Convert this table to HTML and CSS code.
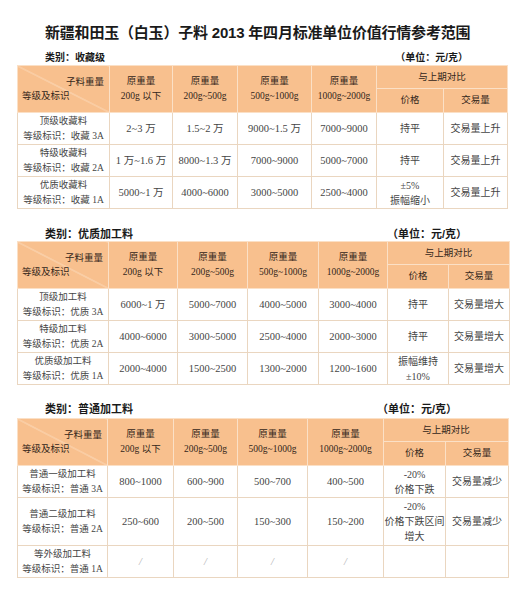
FILE: index.html
```html
<!DOCTYPE html>
<html lang="zh-CN">
<head>
<meta charset="utf-8">
<title>新疆和田玉（白玉）子料 2013 年四月标准单位价值行情参考范围</title>
<link rel="stylesheet" href="styles.css">
</head>
<body>
<div class="page">
  <h1 class="title">新疆和田玉（白玉）子料 2013 年四月标准单位价值行情参考范围</h1>

  <section class="section s1">
    <div class="meta"><span class="cat">类别：收藏级</span><span class="unit">（单位：元/克）</span></div>
    <table class="grid">
      <colgroup><col class="c1"><col class="c2"><col class="c3"><col class="c4"><col class="c5"><col class="c6"><col class="c7"></colgroup>
      <thead>
        <tr class="h1">
          <th rowspan="2" class="diag"><span class="dr">子料重量</span><span class="dl">等级及标识</span></th>
          <th rowspan="2">原重量<br>200g 以下</th>
          <th rowspan="2">原重量<br>200g~500g</th>
          <th rowspan="2">原重量<br>500g~1000g</th>
          <th rowspan="2">原重量<br>1000g~2000g</th>
          <th colspan="2">与上期对比</th>
        </tr>
        <tr class="h2"><th>价格</th><th>交易量</th></tr>
      </thead>
      <tbody>
        <tr><td class="lbl">顶级收藏料<br>等级标识：收藏 3A</td><td>2~3 万</td><td>1.5~2 万</td><td>9000~1.5 万</td><td>7000~9000</td><td class="cj">持平</td><td class="cj">交易量上升</td></tr>
        <tr><td class="lbl">特级收藏料<br>等级标识：收藏 2A</td><td>1 万~1.6 万</td><td>8000~1.3 万</td><td>7000~9000</td><td>5000~7000</td><td class="cj">持平</td><td class="cj">交易量上升</td></tr>
        <tr><td class="lbl">优质收藏料<br>等级标识：收藏 1A</td><td>5000~1 万</td><td>4000~6000</td><td>3000~5000</td><td>2500~4000</td><td class="cj">±5%<br>振幅缩小</td><td class="cj">交易量上升</td></tr>
      </tbody>
    </table>
  </section>

  <section class="section s2">
    <div class="meta"><span class="cat">类别：优质加工料</span><span class="unit">（单位：元/克）</span></div>
    <table class="grid">
      <colgroup><col class="c1"><col class="c2"><col class="c3"><col class="c4"><col class="c5"><col class="c6"><col class="c7"></colgroup>
      <thead>
        <tr class="h1">
          <th rowspan="2" class="diag"><span class="dr">子料重量</span><span class="dl">等级及标识</span></th>
          <th rowspan="2">原重量<br>200g 以下</th>
          <th rowspan="2">原重量<br>200g~500g</th>
          <th rowspan="2">原重量<br>500g~1000g</th>
          <th rowspan="2">原重量<br>1000g~2000g</th>
          <th colspan="2">与上期对比</th>
        </tr>
        <tr class="h2"><th>价格</th><th>交易量</th></tr>
      </thead>
      <tbody>
        <tr><td class="lbl">顶级加工料<br>等级标识：优质 3A</td><td>6000~1 万</td><td>5000~7000</td><td>4000~5000</td><td>3000~4000</td><td class="cj">持平</td><td class="cj">交易量增大</td></tr>
        <tr><td class="lbl">特级加工料<br>等级标识：优质 2A</td><td>4000~6000</td><td>3000~5000</td><td>2500~4000</td><td>2000~3000</td><td class="cj">持平</td><td class="cj">交易量增大</td></tr>
        <tr><td class="lbl">优质级加工料<br>等级标识：优质 1A</td><td>2000~4000</td><td>1500~2500</td><td>1300~2000</td><td>1200~1600</td><td class="cj">振幅维持<br>±10%</td><td class="cj">交易量增大</td></tr>
      </tbody>
    </table>
  </section>

  <section class="section s3">
    <div class="meta"><span class="cat">类别：普通加工料</span><span class="unit">（单位：元/克）</span></div>
    <table class="grid">
      <colgroup><col class="c1"><col class="c2"><col class="c3"><col class="c4"><col class="c5"><col class="c6"><col class="c7"></colgroup>
      <thead>
        <tr class="h1">
          <th rowspan="2" class="diag"><span class="dr">子料重量</span><span class="dl">等级及标识</span></th>
          <th rowspan="2">原重量<br>200g 以下</th>
          <th rowspan="2">原重量<br>200g~500g</th>
          <th rowspan="2">原重量<br>500g~1000g</th>
          <th rowspan="2">原重量<br>1000g~2000g</th>
          <th colspan="2">与上期对比</th>
        </tr>
        <tr class="h2"><th>价格</th><th>交易量</th></tr>
      </thead>
      <tbody>
        <tr><td class="lbl">普通一级加工料<br>等级标识：普通 3A</td><td>800~1000</td><td>600~900</td><td>500~700</td><td>400~500</td><td class="cj">-20%<br>价格下跌</td><td class="cj">交易量减少</td></tr>
        <tr class="tall"><td class="lbl">普通二级加工料<br>等级标识：普通 2A</td><td>250~600</td><td>200~500</td><td>150~300</td><td>150~200</td><td class="cj">-20%<br>价格下跌区间<br>增大</td><td class="cj">交易量减少</td></tr>
        <tr><td class="lbl">等外级加工料<br>等级标识：普通 1A</td><td class="na">/</td><td class="na">/</td><td class="na">/</td><td class="na">/</td><td></td><td></td></tr>
      </tbody>
    </table>
  </section>
</div>
</body>
</html>
```

FILE: styles.css
```css
* { box-sizing: border-box; }

body {
  margin: 0;
  background: #fff;
  font-family: "Liberation Serif", "Noto Sans CJK SC", serif;
  color: #444;
}

.page {
  width: 523px;
  padding: 23px 0 0 17px;
}

.title {
  height: 20px;
  margin: 0 0 0 28px;
  font: bold 15px/20px "Liberation Sans", "Noto Sans CJK SC", sans-serif;
  letter-spacing: -0.2px;
  color: #1a1a1a;
  white-space: nowrap;
}

.section { margin-top: 8px; }
.s1 { width: 490px; }
.s2 { width: 492px; margin-top: 18px; }
.s3 { width: 491px; margin-top: 17px; }

.meta {
  display: flex;
  justify-content: space-between;
  align-items: center;
  height: 14px;
  padding-left: 28px;
  font: bold 11px/14px "Liberation Sans", "Noto Sans CJK SC", sans-serif;
  color: #1a1a1a;
}
.s1 .meta { font-size: 10px; padding-right: 39px; }
.s2 .meta { padding-right: 42px; }
.s3 .meta { padding-right: 51px; margin-bottom: 2px; }

.grid {
  width: 100%;
  table-layout: fixed;
  border-collapse: collapse;
  border: 1px solid #ead6c0;
}

.s1 .c1 { width: 92px; } .s1 .c2 { width: 63px; } .s1 .c3 { width: 65px; }
.s1 .c4 { width: 74px; } .s1 .c5 { width: 65px; } .s1 .c6 { width: 67px; } .s1 .c7 { width: 64px; }

.s2 .c1 { width: 91px; } .s2 .c2 { width: 69px; } .s2 .c3 { width: 70px; }
.s2 .c4 { width: 71px; } .s2 .c5 { width: 69px; } .s2 .c6 { width: 61px; } .s2 .c7 { width: 61px; }

.s3 .c1 { width: 90px; } .s3 .c2 { width: 66px; } .s3 .c3 { width: 64px; }
.s3 .c4 { width: 70px; } .s3 .c5 { width: 76px; } .s3 .c6 { width: 62px; } .s3 .c7 { width: 63px; }

th {
  background: #f8c08e;
  color: #33261a;
  font-weight: normal;
  font-size: 9.5px;
  line-height: 15px;
  padding: 0;
  text-align: center;
  vertical-align: middle;
  border: 1px solid #fbe0c6;
}
.h1 th { height: 23px; }
.h2 th { height: 24px; }

.diag {
  text-align: left;
  background:
    linear-gradient(to top right, transparent calc(50% - 0.6px), #fde6cf 50%, transparent calc(50% + 0.6px)),
    #f8c08e;
}
.diag .dr, .diag .dl { display: block; line-height: 14px; }
.diag .dr { text-align: right; padding-right: 5px; }
.diag .dl { padding-left: 4px; }

td {
  height: 32px;
  border: 1px solid #ead6c0;
  padding: 0;
  font-size: 10.5px;
  line-height: 15px;
  text-align: center;
  vertical-align: middle;
  color: #454545;
}
.tall td { height: 48px; }
td.lbl { font-size: 9.5px; }
td.cj { font-size: 10px; }
td.na { color: #b0b0b0; font-style: italic; }
```
